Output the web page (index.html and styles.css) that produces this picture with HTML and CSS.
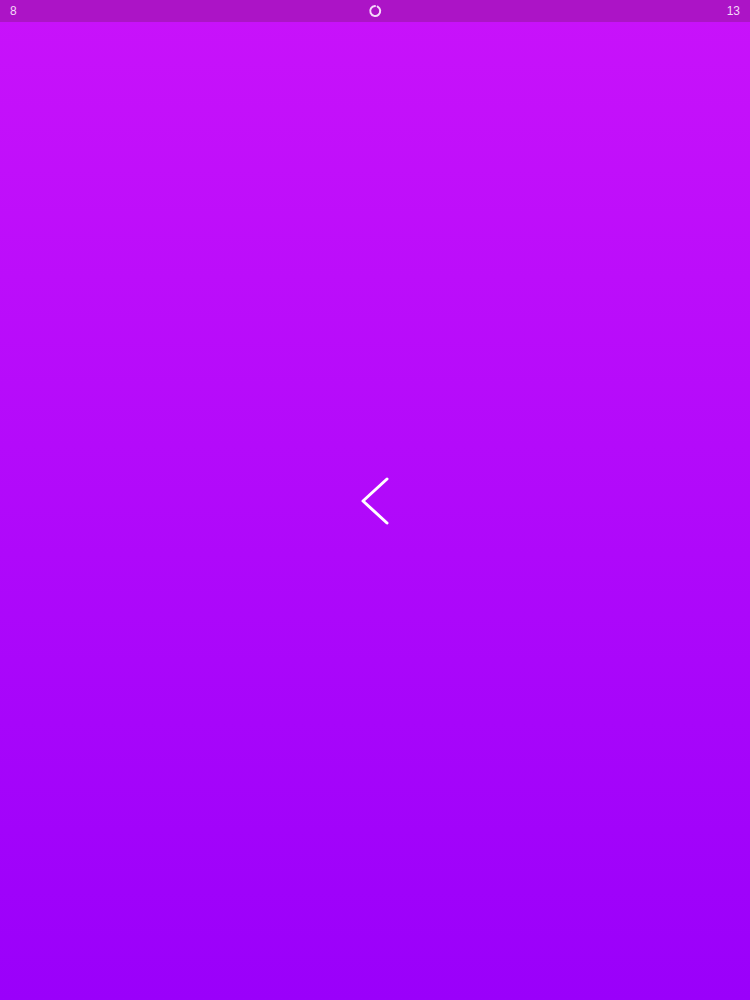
FILE: index.html
```html
<!DOCTYPE html>
<html>
<head>
<meta charset="utf-8">
<link rel="stylesheet" href="styles.css">
</head>
<body>
<div class="screen">
  <div class="statusbar">
    <span class="num left">8</span>
    <svg class="spinner" width="14" height="14" viewBox="0 0 14 14">
      <path d="M9.6 2.6 A5 5 0 1 1 7 2" fill="none" stroke="#f6d8fb" stroke-width="2" stroke-linecap="round"/>
    </svg>
    <span class="num right">13</span>
  </div>
  <div class="main">
    <svg class="chevron" width="34" height="52" viewBox="0 0 34 52">
      <path d="M27 3 L3 25 L27 47" fill="none" stroke="#ffffff" stroke-width="3" stroke-linecap="round" stroke-linejoin="round"/>
    </svg>
  </div>
</div>
</body>
</html>
```

FILE: styles.css
```css
html, body {
  margin: 0;
  padding: 0;
}
body {
  width: 750px;
  height: 1000px;
  overflow: hidden;
  font-family: "Liberation Sans", Arial, sans-serif;
}
.screen {
  width: 750px;
  height: 1000px;
  display: flex;
  flex-direction: column;
  background: linear-gradient(to bottom, #c912fa 0%, #9a00fa 100%);
}
.statusbar {
  height: 22px;
  flex: 0 0 22px;
  background: #ac14c6;
  display: grid;
  grid-template-columns: 1fr auto 1fr;
  align-items: center;
  padding: 0 10px;
  box-sizing: border-box;
  color: #f3d8f8;
  font-size: 12px;
}
.left {
  justify-self: start;
}
.right {
  justify-self: end;
}
.spinner {
  display: block;
}
.main {
  flex: 1;
  display: flex;
  align-items: center;
  justify-content: center;
  padding-bottom: 18px;
}
.chevron {
  display: block;
  margin-left: 3px;
}
```
